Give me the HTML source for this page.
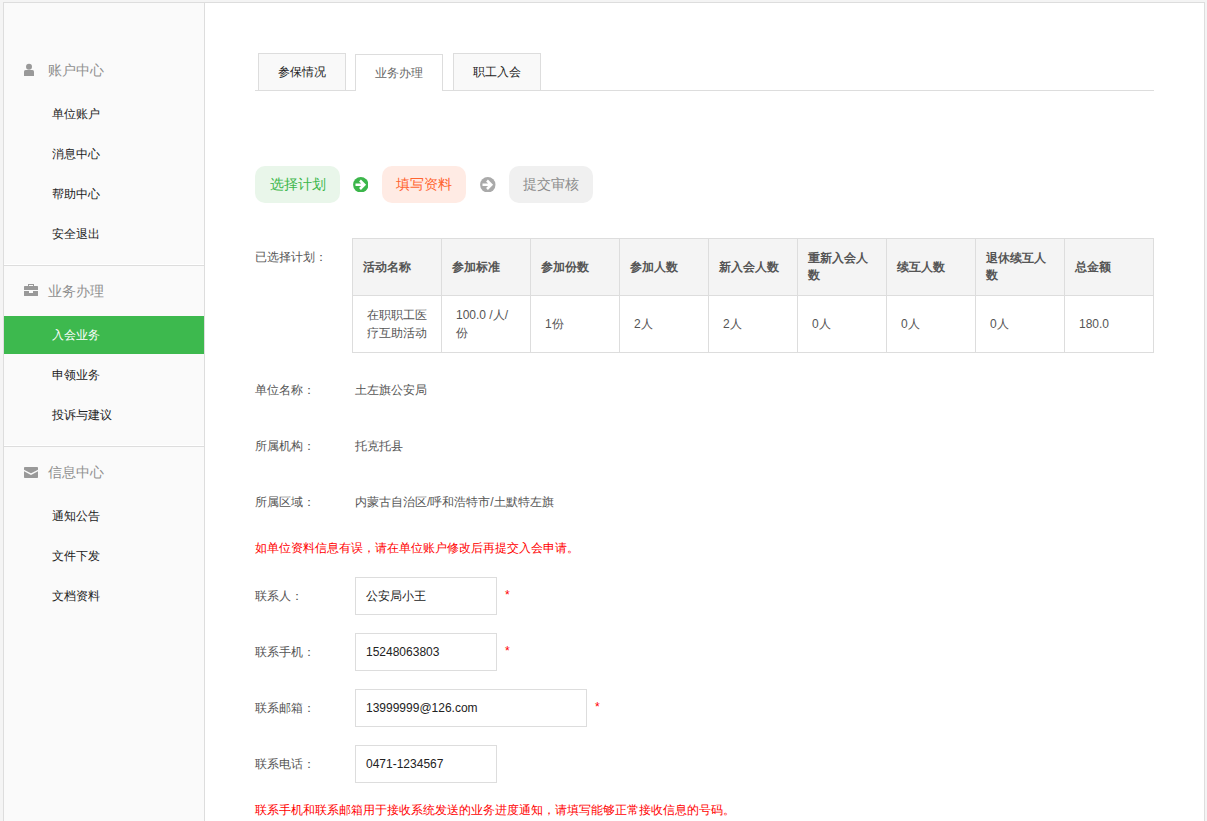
<!DOCTYPE html>
<html><head><meta charset="utf-8">
<style>
*{margin:0;padding:0;box-sizing:border-box}
html,body{width:1207px;height:821px;overflow:hidden;background:#f4f4f4;font-family:"Liberation Sans",sans-serif;font-size:12px;color:#333}
.abs{position:absolute}
#wrap{position:absolute;left:3px;top:2px;width:1202px;height:900px;border:1px solid #dddddd;background:#fff}
#side{position:absolute;left:4px;top:3px;width:200px;height:900px;background:#fafafa;border-right:1px solid #dddddd;box-sizing:content-box}
.sh{position:absolute;left:0;width:200px;height:50px;line-height:50px;font-size:14px;color:#8f8f8f}
.sh span{position:absolute;left:44px;top:0}
.sh svg{position:absolute;left:20px}
.si{position:absolute;left:0;width:200px;height:38px;line-height:38px;font-size:12px;color:#222}
.si span{position:absolute;left:48px;top:0}
.si.on{background:#3db94e;color:#fff}
.dv{position:absolute;left:0;width:200px;height:1px;background:#dddddd;box-shadow:0 -1px 0 #fff}
.t{position:absolute;white-space:nowrap}
.tab{position:absolute;top:53px;width:88px;height:37px;border:1px solid #dddddd;border-bottom:none;background:#f9f9f9;text-align:center;line-height:36px;color:#222}
.pill{position:absolute;top:166px;width:84px;height:37px;border-radius:10px;text-align:center;line-height:37px;font-size:14px}
table{position:absolute;left:352px;top:238px;border-collapse:collapse;table-layout:fixed;width:802px}
td,th{border:1px solid #dddddd;width:89px;text-align:left;vertical-align:middle}
th{height:57px;background:#f4f4f4;font-weight:bold;color:#555;padding:0 10px;line-height:17px}
td{height:57px;color:#555;padding:0 13px 0 14px;line-height:18px}
.lab{position:absolute;left:255px;color:#555;white-space:nowrap}
.val{position:absolute;left:355px;color:#555;white-space:nowrap}
.inp{position:absolute;left:355px;width:142px;height:38px;border:1px solid #dddddd;background:#fff;padding-left:10px;line-height:36px;color:#222}
.star{position:absolute;color:#f00;font-size:12px}
.red{position:absolute;left:255px;color:#f00;white-space:nowrap}
</style></head><body>
<div id="wrap"></div>
<div id="side">
  <div class="sh" style="top:42px">
    <span>账户中心</span></div>
  <div class="si" style="top:92px"><span>单位账户</span></div>
  <div class="si" style="top:132px"><span>消息中心</span></div>
  <div class="si" style="top:172px"><span>帮助中心</span></div>
  <div class="si" style="top:212px"><span>安全退出</span></div>
  <div class="dv" style="top:262px"></div>
  <div class="sh" style="top:263px">
    <span>业务办理</span></div>
  <div class="si on" style="top:313px"><span>入会业务</span></div>
  <div class="si" style="top:353px"><span>申领业务</span></div>
  <div class="si" style="top:393px"><span>投诉与建议</span></div>
  <div class="dv" style="top:443px"></div>
  <div class="sh" style="top:444px">
    <span>信息中心</span></div>
  <div class="si" style="top:494px"><span>通知公告</span></div>
  <div class="si" style="top:534px"><span>文件下发</span></div>
  <div class="si" style="top:574px"><span>文档资料</span></div>
</div>


<svg class="abs" style="left:24px;top:63px" width="10" height="13" viewBox="0 0 10 13"><circle cx="5" cy="3.8" r="3" fill="#999"/><path d="M0 13V8.6Q0 7 1.6 7H8.4Q10 7 10 8.6V13Z" fill="#999"/></svg>
<svg class="abs" style="left:24px;top:284px" width="14" height="12" viewBox="0 0 14 12"><path fill="#999" fill-rule="evenodd" d="M4 0H10V2H4ZM5 1V2H9V1Z"/><path fill="#999" d="M0.6 2H13.4Q14 2 14 2.6V6H0V2.6Q0 2 0.6 2Z"/><path fill="#999" d="M0 7H5V9H9V7H14V11.4Q14 12 13.4 12H0.6Q0 12 0 11.4Z"/></svg>
<svg class="abs" style="left:24px;top:467px" width="14" height="11" viewBox="0 0 14 11"><rect width="14" height="11" rx="0.8" fill="#999"/><polyline points="-0.5,3.3 7,7.2 14.5,3.3" fill="none" stroke="#fafafa" stroke-width="1.3"/></svg>
<svg class="abs" style="left:352.9px;top:176.6px" width="15.6" height="15.6" viewBox="0 0 15.6 15.6"><circle cx="7.8" cy="7.8" r="7.7" fill="#3cb64b"/><path fill="#fff" d="M2.5 6.5H8.1L6.1 4.5L7.9 2.6L13.1 7.8L7.9 13L6.1 11.1L8.1 9.1H2.5Z"/></svg>
<svg class="abs" style="left:480px;top:176.6px" width="15.6" height="15.6" viewBox="0 0 15.6 15.6"><circle cx="7.8" cy="7.8" r="7.7" fill="#aaaaaa"/><path fill="#fff" d="M2.5 6.5H8.1L6.1 4.5L7.9 2.6L13.1 7.8L7.9 13L6.1 11.1L8.1 9.1H2.5Z"/></svg>

<!-- tabs -->
<div class="abs" style="left:255px;top:90px;width:899px;height:1px;background:#dddddd"></div>
<div class="tab" style="left:258px">参保情况</div>
<div class="tab" style="left:355px;top:54px;background:#fff;color:#666">业务办理</div>
<div class="tab" style="left:453px">职工入会</div>

<!-- steps -->
<div class="pill" style="left:255px;width:85px;background:#e9f6ea;color:#3cb64b">选择计划</div>
<div class="pill" style="left:382px;background:#ffebe4;color:#ff6530">填写资料</div>
<div class="pill" style="left:509px;background:#f0f0f0;color:#8c8c8c">提交审核</div>

<div class="lab" style="top:249px">已选择计划：</div>
<table>
<tr><th>活动名称</th><th>参加标准</th><th>参加份数</th><th>参加人数</th><th>新入会人数</th><th>重新入会人数</th><th>续互人数</th><th>退休续互人数</th><th>总金额</th></tr>
<tr><td>在职职工医疗互助活动</td><td>100.0 /人/份</td><td>1份</td><td>2人</td><td>2人</td><td>0人</td><td>0人</td><td>0人</td><td>180.0</td></tr>
</table>

<div class="lab" style="top:382px">单位名称：</div><div class="val" style="top:382px">土左旗公安局</div>
<div class="lab" style="top:438px">所属机构：</div><div class="val" style="top:438px">托克托县</div>
<div class="lab" style="top:494px">所属区域：</div><div class="val" style="top:494px">内蒙古自治区/呼和浩特市/土默特左旗</div>
<div class="red" style="top:540px">如单位资料信息有误，请在单位账户修改后再提交入会申请。</div>

<div class="lab" style="top:588px">联系人：</div><div class="inp" style="top:577px">公安局小王</div><div class="star" style="left:505px;top:588px">*</div>
<div class="lab" style="top:644px">联系手机：</div><div class="inp" style="top:633px">15248063803</div><div class="star" style="left:505px;top:644px">*</div>
<div class="lab" style="top:700px">联系邮箱：</div><div class="inp" style="top:689px;width:232px">13999999@126.com</div><div class="star" style="left:595px;top:700px">*</div>
<div class="lab" style="top:756px">联系电话：</div><div class="inp" style="top:745px">0471-1234567</div>
<div class="red" style="top:802px">联系手机和联系邮箱用于接收系统发送的业务进度通知，请填写能够正常接收信息的号码。</div>
</body></html>
